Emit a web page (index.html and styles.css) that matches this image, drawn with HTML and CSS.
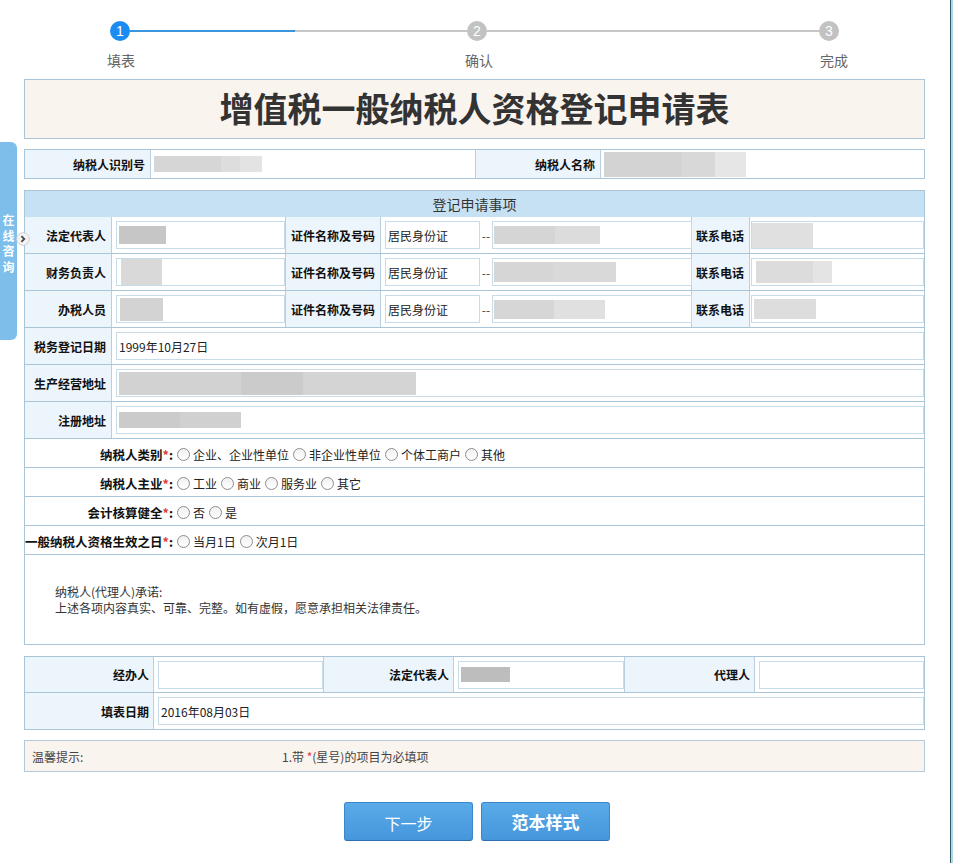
FILE: index.html
```html
<!DOCTYPE html>
<html lang="zh-CN">
<head>
<meta charset="utf-8">
<title>增值税一般纳税人资格登记申请表</title>
<link rel="stylesheet" href="styles.css">
</head>
<body>
<div class="side-tab"><span>在</span><span>线</span><span>咨</span><span>询</span></div>
<div class="side-toggle"><svg width="14" height="14" viewBox="0 0 14 14"><circle cx="7" cy="7" r="6.3" fill="#f4f4f4" stroke="#cfcfcf"/><path d="M5.4 4.1 L8.3 7 L5.4 9.9" fill="none" stroke="#4a4a4a" stroke-width="1.8"/></svg></div>
<div class="win-edge"></div>

<div class="page">
  <div class="stepper">
    <div class="dot active">1</div>
    <div class="line done"></div>
    <div class="dot">2</div>
    <div class="line"></div>
    <div class="dot">3</div>
    <div class="step-label s1">填表</div>
    <div class="step-label s2">确认</div>
    <div class="step-label s3">完成</div>
  </div>

  <div class="title-box"><h1>增值税一般纳税人资格登记申请表</h1></div>

  <div class="id-row">
    <div class="cell label">纳税人识别号</div>
    <div class="cell"><span class="blur tax-id"></span></div>
    <div class="cell label">纳税人名称</div>
    <div class="cell"><span class="blur tax-name"></span></div>
  </div>

  <div class="apply">
    <div class="apply-head">登记申请事项</div>

    <div class="person-row">
      <div class="cell label">法定代表人</div>
      <div class="cell"><div class="input"><span class="blur n1"></span></div></div>
      <div class="cell label">证件名称及号码</div>
      <div class="cell"><div class="input id-type">居民身份证</div><span class="dash">--</span><div class="input id-no"><span class="blur i1"></span></div></div>
      <div class="cell label">联系电话</div>
      <div class="cell"><div class="input phone"><span class="blur p1"></span></div></div>
    </div>
    <div class="person-row">
      <div class="cell label">财务负责人</div>
      <div class="cell"><div class="input"><span class="blur n2"></span></div></div>
      <div class="cell label">证件名称及号码</div>
      <div class="cell"><div class="input id-type">居民身份证</div><span class="dash">--</span><div class="input id-no"><span class="blur i2"></span></div></div>
      <div class="cell label">联系电话</div>
      <div class="cell"><div class="input phone"><span class="blur p2"></span></div></div>
    </div>
    <div class="person-row">
      <div class="cell label">办税人员</div>
      <div class="cell"><div class="input"><span class="blur n3"></span></div></div>
      <div class="cell label">证件名称及号码</div>
      <div class="cell"><div class="input id-type">居民身份证</div><span class="dash">--</span><div class="input id-no"><span class="blur i3"></span></div></div>
      <div class="cell label">联系电话</div>
      <div class="cell"><div class="input phone"><span class="blur p3"></span></div></div>
    </div>

    <div class="info-row">
      <div class="cell label">税务登记日期</div>
      <div class="cell"><div class="input">1999年10月27日</div></div>
    </div>
    <div class="info-row">
      <div class="cell label">生产经营地址</div>
      <div class="cell"><div class="input"><span class="blur addr1"></span></div></div>
    </div>
    <div class="info-row">
      <div class="cell label">注册地址</div>
      <div class="cell"><div class="input"><span class="blur addr2"></span></div></div>
    </div>

    <div class="radio-row">
      <div class="radio-label"><span>纳税人类别<em>*</em>:</span></div>
      <label class="radio"><span class="circle"></span>企业、企业性单位</label>
      <label class="radio"><span class="circle"></span>非企业性单位</label>
      <label class="radio"><span class="circle"></span>个体工商户</label>
      <label class="radio"><span class="circle"></span>其他</label>
    </div>
    <div class="radio-row">
      <div class="radio-label"><span>纳税人主业<em>*</em>:</span></div>
      <label class="radio"><span class="circle"></span>工业</label>
      <label class="radio"><span class="circle"></span>商业</label>
      <label class="radio"><span class="circle"></span>服务业</label>
      <label class="radio"><span class="circle"></span>其它</label>
    </div>
    <div class="radio-row">
      <div class="radio-label"><span>会计核算健全<em>*</em>:</span></div>
      <label class="radio"><span class="circle"></span>否</label>
      <label class="radio"><span class="circle"></span>是</label>
    </div>
    <div class="radio-row">
      <div class="radio-label"><span>一般纳税人资格生效之日<em>*</em>:</span></div>
      <label class="radio"><span class="circle"></span>当月1日</label>
      <label class="radio"><span class="circle"></span>次月1日</label>
    </div>

    <div class="promise">
      <p>纳税人(代理人)承诺:</p>
      <p>上述各项内容真实、可靠、完整。如有虚假，愿意承担相关法律责任。</p>
    </div>
  </div>

  <div class="sign">
    <div class="sign-row">
      <div class="cell label">经办人</div>
      <div class="cell"><div class="input"></div></div>
      <div class="cell label">法定代表人</div>
      <div class="cell"><div class="input"><span class="blur legal"></span></div></div>
      <div class="cell label">代理人</div>
      <div class="cell"><div class="input"></div></div>
    </div>
    <div class="sign-row">
      <div class="cell label">填表日期</div>
      <div class="cell wide"><div class="input">2016年08月03日</div></div>
    </div>
  </div>

  <div class="tip">
    <span class="tip-title">温馨提示:</span>
    <span class="tip-text">1.带 <em>*</em>(星号)的项目为必填项</span>
  </div>

  <div class="actions">
    <button class="btn btn-next">下一步</button>
    <button class="btn btn-sample">范本样式</button>
  </div>
</div>
</body>
</html>
```

FILE: styles.css
```css
* { box-sizing: border-box; }
html, body { margin: 0; padding: 0; background: #fff; }
body {
  font-family: "Noto Sans CJK SC", "Liberation Sans", sans-serif;
  font-size: 12px;
  color: #222;
  overflow: hidden;
}
p { margin: 0; }
em { font-style: normal; color: #e43a3a; }

/* floating widgets */
.side-tab {
  position: fixed;
  left: 0;
  top: 142px;
  width: 17px;
  height: 198px;
  background: #7dbfea;
  border-radius: 0 6px 6px 0;
  display: flex;
  flex-direction: column;
  align-items: center;
  justify-content: center;
  padding-top: 4px;
  color: #fff;
  font-weight: bold;
  font-size: 12px;
  line-height: 15.5px;
}
.side-toggle {
  position: fixed;
  left: 16px;
  top: 232px;
  width: 14px;
  height: 14px;
}
.side-toggle svg { display: block; }
.win-edge {
  position: fixed;
  right: 0;
  top: 0;
  bottom: 0;
  width: 3px;
  border-left: 1px solid #3d5a6b;
  background: #a6dbe3;
}

.page {
  margin-left: 24px;
  width: 901px;
}

/* stepper */
.stepper {
  display: grid;
  grid-template-columns: 20px 337px 20px 332px 20px;
  grid-template-rows: 20px auto;
  margin-left: 86px;
  padding-top: 21px;
}
.dot {
  width: 20px;
  height: 20px;
  border-radius: 50%;
  background: #c2c2c2;
  color: #fff;
  font: 14px/20px "Liberation Sans", sans-serif;
  text-align: center;
}
.dot.active { background: #1b8cf2; }
.line {
  height: 2px;
  align-self: center;
  margin-top: -1px;
  background: #c6c6c6;
}
.line.done { background: linear-gradient(to right, #3a95dd 165px, #c6c6c6 165px); }
.step-label {
  grid-row: 2;
  justify-self: center;
  margin-top: 11px;
  font-size: 14px;
  line-height: 16px;
  color: #666;
  white-space: nowrap;
}
.s1 { grid-column: 1; margin-left: 2px; }
.s2 { grid-column: 3; margin-left: 4px; }
.s3 { grid-column: 5; margin-left: 10px; }

/* title */
.title-box {
  margin-top: 11px;
  height: 60px;
  border: 1px solid #aac5d8;
  background: #faf4ef;
}
.title-box h1 {
  margin: 0;
  text-align: center;
  font-size: 34px;
  line-height: 56px;
  font-weight: bold;
  color: #333;
}

/* generic cells */
.cell {
  display: flex;
  align-items: center;
  min-width: 0;
  border-right: 1px solid #b9cfe0;
}
.cell:last-child { border-right: 0; }
.label {
  justify-content: flex-end;
  padding-right: 5px;
  background: #edf5fc;
  font-weight: bold;
  color: #111;
  white-space: nowrap;
}
.input {
  flex: 1;
  height: 28px;
  margin-left: 4px;
  padding-left: 2px;
  border: 1px solid #c8dbe9;
  background: #fff;
  display: flex;
  align-items: center;
  white-space: nowrap;
  color: #222;
}

.blur { display: block; flex: none; }

/* id row */
.id-row {
  margin-top: 10px;
  height: 30px;
  display: grid;
  grid-template-columns: 126px 325px 125px 1fr;
  border: 1px solid #aac5d8;
}
.tax-id { width: 108px; height: 16px; margin-left: 3px; background: linear-gradient(to right, #d6d6d6 0 62%, #dddddd 62% 80%, #e3e3e3 80%); }
.tax-name { width: 142px; height: 25px; margin-left: 3px; background: linear-gradient(to right, #d3d3d3 0 55%, #d8d8d8 55% 78%, #e6e6e6 78%); }

/* apply section */
.apply {
  margin-top: 11px;
  border: 1px solid #aac5d8;
}
.apply-head {
  height: 26px;
  background: #c6e1f3;
  text-align: center;
  font-size: 14px;
  line-height: 26px;
  color: #333;
}
.person-row {
  display: grid;
  grid-template-columns: 87px 174px 95px 311px 58px 1fr;
  height: 37px;
  border-bottom: 1px solid #abc5d8;
}
.id-type { flex: 0 0 95px; }
.dash { width: 12px; text-align: center; color: #444; flex: none; }
.id-no { flex: 0 0 200px; margin-left: 0; padding-left: 1px; }
.phone { margin-left: 1px; padding-left: 0; }

.n1 { width: 47px; height: 18px; background: #c6c6c6; }
.n2 { width: 41px; height: 26px; margin-left: 2px; background: #d9d9d9; }
.n3 { width: 43px; height: 23px; margin-left: 1px; background: #d3d3d3; }
.i1 { width: 106px; height: 18px; background: linear-gradient(to right, #d5d5d5 0 58%, #dcdcdc 58%); }
.i2 { width: 122px; height: 20px; background: linear-gradient(to right, #d6d6d6 0 48%, #d9d9d9 48%); }
.i3 { width: 111px; height: 19px; background: linear-gradient(to right, #d6d6d6 0 54%, #e0e0e0 54%); }
.p1 { width: 61px; height: 25px; background: #e0e0e0; }
.p2 { width: 76px; height: 22px; margin-left: 4px; background: linear-gradient(to right, #dcdcdc 0 75%, #e4e4e4 75%); }
.p3 { width: 62px; height: 20px; margin-left: 2px; background: #dddddd; }

.info-row {
  display: grid;
  grid-template-columns: 87px 1fr;
  height: 37px;
  border-bottom: 1px solid #abc5d8;
}
.addr1 { width: 297px; height: 23px; background: linear-gradient(to right, #d2d2d2 0 41%, #cbcbcb 41% 62%, #d4d4d4 62%); }
.addr2 { width: 122px; height: 16px; background: linear-gradient(to right, #cbcbcb 0 50%, #d0d0d0 50%); }

.radio-row {
  display: flex;
  align-items: center;
  height: 29px;
  padding-top: 3px;
  border-bottom: 1px solid #a9c3d6;
  white-space: nowrap;
}
.radio-label {
  width: 148px;
  flex: none;
  display: flex;
  justify-content: flex-end;
  font-weight: bold;
  font-size: 12.5px;
  color: #111;
}
.radio {
  display: flex;
  align-items: center;
  margin-left: 4px;
  margin-right: 4px;
  color: #222;
}
.radio + .radio { margin-left: 0; }
.circle {
  width: 13px;
  height: 13px;
  border-radius: 50%;
  border: 1px solid #8d8d8d;
  background: linear-gradient(#f0f0f0, #ffffff);
  margin-right: 3px;
  flex: none;
}

.promise {
  height: 89px;
  padding: 29px 0 0 30px;
  line-height: 16px;
  color: #333;
}

/* sign table */
.sign {
  margin-top: 11px;
  border: 1px solid #aac5d8;
}
.sign-row {
  display: grid;
  grid-template-columns: 129px 170px 130px 171px 130px 1fr;
  height: 36px;
}
.sign-row:first-child { border-bottom: 1px solid #abc5d8; }
.sign-row .label { padding-right: 4px; }
.sign-row .wide { grid-column: 2 / -1; }
.legal { width: 49px; height: 15px; background: #bdbdbd; }

/* tip */
.tip {
  margin-top: 10px;
  height: 32px;
  border: 1px solid #b3cadb;
  background: #faf4ef;
  display: flex;
  align-items: center;
  padding-left: 7px;
  color: #444;
}
.tip-title { width: 250px; flex: none; }

/* actions */
.actions {
  display: flex;
  justify-content: center;
  gap: 8px;
  margin-top: 30px;
  padding-left: 5px;
}
.btn {
  width: 129px;
  height: 39px;
  border: 1px solid #3c86c9;
  border-bottom-color: #2f6db0;
  border-radius: 3px;
  background: linear-gradient(#5aabe8, #4596dc);
  color: #fff;
  font-family: "Noto Sans CJK SC", sans-serif;
  padding: 0;
}
.btn-next { font-size: 16px; padding-top: 3px; }
.btn-sample { font-size: 17px; font-weight: bold; }
```
